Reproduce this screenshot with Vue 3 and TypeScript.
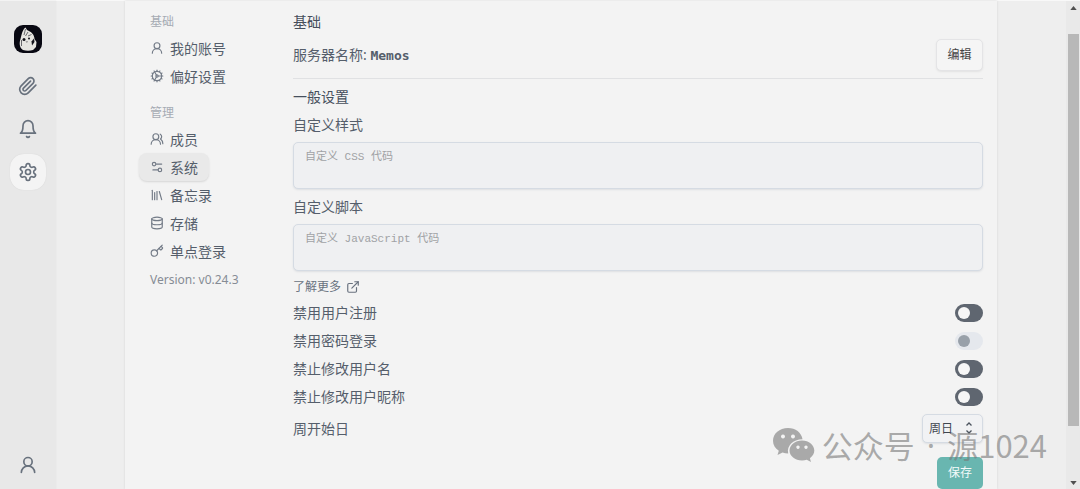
<script setup lang="ts">
import { ref } from 'vue'

const circle = (cx: number, cy: number, r: number): string =>
  `M${cx - r} ${cy}a${r} ${r} 0 1 0 ${2 * r} 0a${r} ${r} 0 1 0 ${-2 * r} 0`

const icons: Record<string, string[]> = {
  clip: ['m21.44 11.05-9.19 9.19a6 6 0 0 1-8.49-8.49l8.57-8.57A4 4 0 1 1 18 8.84l-8.59 8.57a2 2 0 0 1-2.83-2.83l8.49-8.48'],
  bell: ['M6 8a6 6 0 0 1 12 0c0 7 3 9 3 9H3s3-2 3-9', 'M10.3 21a1.94 1.94 0 0 0 3.4 0'],
  settings: [
    'M12.22 2h-.44a2 2 0 0 0-2 2v.18a2 2 0 0 1-1 1.73l-.43.25a2 2 0 0 1-2 0l-.15-.08a2 2 0 0 0-2.73.73l-.22.38a2 2 0 0 0 .73 2.73l.15.1a2 2 0 0 1 1 1.72v.51a2 2 0 0 1-1 1.74l-.15.09a2 2 0 0 0-.73 2.73l.22.38a2 2 0 0 0 2.73.73l.15-.08a2 2 0 0 1 2 0l.43.25a2 2 0 0 1 1 1.73V20a2 2 0 0 0 2 2h.44a2 2 0 0 0 2-2v-.18a2 2 0 0 1 1-1.73l.43-.25a2 2 0 0 1 2 0l.15.08a2 2 0 0 0 2.73-.73l.22-.39a2 2 0 0 0-.73-2.73l-.15-.08a2 2 0 0 1-1-1.74v-.5a2 2 0 0 1 1-1.74l.15-.09a2 2 0 0 0 .73-2.73l-.22-.38a2 2 0 0 0-2.73-.73l-.15.08a2 2 0 0 1-2 0l-.43-.25a2 2 0 0 1-1-1.73V4a2 2 0 0 0-2-2z',
    circle(12, 12, 3),
  ],
  user: [circle(12, 8, 5), 'M20 21a8 8 0 0 0-16 0'],
  cog: [
    circle(12, 12, 8),
    circle(12, 12, 2),
    'M12 2v2', 'M12 22v-2', 'm17 20.66-1-1.73', 'M11 10.27 7 3.34', 'm20.66 17-1.73-1', 'm3.34 7 1.73 1',
    'M14 12h8', 'M2 12h2', 'm20.66 7-1.73 1', 'm3.34 17 1.73-1', 'm17 3.34-1 1.73', 'm11 13.73-4 6.93',
  ],
  users: ['M18 21a8 8 0 0 0-16 0', circle(10, 8, 5), 'M22 20c0-3.37-2-6.5-4-8a5 5 0 0 0-.45-8.3'],
  sliders: ['M20 7h-9', 'M14 17H5', circle(17, 17, 3), circle(7, 7, 3)],
  library: ['m16 6 4 14', 'M12 6v14', 'M8 8v12', 'M4 4v16'],
  database: ['M3 5a9 3 0 1 0 18 0a9 3 0 1 0-18 0', 'M3 5v14a9 3 0 0 0 18 0V5', 'M3 12a9 3 0 0 0 18 0'],
  key: ['m15.5 7.5 2.3 2.3a1 1 0 0 0 1.4 0l2.1-2.1a1 1 0 0 0 0-1.4L19 4', 'm21 2-9.6 9.6', circle(7.5, 15.5, 5.5)],
  external: ['M15 3h6v6', 'M10 14 21 3', 'M18 13v6a2 2 0 0 1-2 2H5a2 2 0 0 1-2-2V8a2 2 0 0 1 2-2h6'],
}

const rail = [
  { icon: 'clip', label: '资源库' },
  { icon: 'bell', label: '通知' },
  { icon: 'settings', label: '设置' },
]

const groups = [
  {
    title: '基础',
    items: [
      { icon: 'user', label: '我的账号' },
      { icon: 'cog', label: '偏好设置' },
    ],
  },
  {
    title: '管理',
    items: [
      { icon: 'users', label: '成员' },
      { icon: 'sliders', label: '系统' },
      { icon: 'library', label: '备忘录' },
      { icon: 'database', label: '存储' },
      { icon: 'key', label: '单点登录' },
    ],
  },
]

const active = ref('系统')
const css = ref('')
const script = ref('')
const weekStart = ref('周日')
const toggles = ref([
  { id: 'signup', label: '禁用用户注册', on: false, disabled: false },
  { id: 'password', label: '禁用密码登录', on: false, disabled: true },
  { id: 'username', label: '禁止修改用户名', on: false, disabled: false },
  { id: 'nickname', label: '禁止修改用户昵称', on: false, disabled: false },
])
</script>

<template>
  <div class="page">
    <aside class="rail">
      <a class="avatar" href="#" aria-label="Memos">
        <svg viewBox="0 0 28 28" aria-hidden="true">
          <path d="M9 25C5.500 23 5 18 6.500 14C7.500 11 8 5 11.500 2.500L13 5C17 6.500 20.500 9.500 20.500 14L22.500 17L22 22L19 25Q14 26.500 9 25Z" fill="#e6e5e1" />
          <path d="M11.500 4L10 10M14 7L11.500 11M17.500 9.500L14 11M7.500 15V21" stroke="#4a4b50" stroke-width="0.800" fill="none" />
          <circle cx="10" cy="14.500" r="1.500" fill="#14141c" />
          <circle cx="15" cy="13.500" r="1" fill="#14141c" />
          <path d="M17.500 16.500L20 13.500L20.500 17L18 20.500Z" fill="#14141c" />
          <path d="M11.500 16.500L13 18L14 16Z" fill="#8a8a8c" />
        </svg>
      </a>
      <nav class="rail-nav">
        <a v-for="r in rail" :key="r.icon" href="#" class="rail-link" :class="{ current: r.icon === 'settings' }" :aria-label="r.label">
          <svg class="icon" viewBox="0 0 24 24" aria-hidden="true"><path v-for="d in icons[r.icon]" :key="d" :d="d" /></svg>
        </a>
      </nav>
      <a href="#" class="rail-link account" aria-label="账号">
        <svg class="icon" viewBox="0 0 24 24" aria-hidden="true"><path v-for="d in icons.user" :key="d" :d="d" /></svg>
      </a>
    </aside>

    <div class="stage">
      <section class="card">
        <nav class="menu">
          <div v-for="g in groups" :key="g.title" class="group">
            <span class="group-title">{{ g.title }}</span>
            <button v-for="i in g.items" :key="i.label" type="button" class="item" :class="{ active: active === i.label }" @click="active = i.label">
              <svg class="icon" viewBox="0 0 24 24" aria-hidden="true"><path v-for="d in icons[i.icon]" :key="d" :d="d" /></svg>
              <span>{{ i.label }}</span>
            </button>
          </div>
          <span class="version">Version: v0.24.3</span>
        </nav>

        <main class="panel">
          <p class="line strong">基础</p>
          <div class="row server">
            <div>服务器名称: <span class="name">Memos</span></div>
            <button type="button" class="btn edit">编辑</button>
          </div>
          <hr class="rule" />
          <p class="line strong">一般设置</p>
          <label class="line" for="css">自定义样式</label>
          <textarea id="css" v-model="css" class="area" placeholder="自定义 CSS 代码"></textarea>
          <label class="line" for="script">自定义脚本</label>
          <textarea id="script" v-model="script" class="area" placeholder="自定义 JavaScript 代码"></textarea>
          <a href="#" class="more">
            <span>了解更多</span>
            <svg class="icon" viewBox="0 0 24 24" aria-hidden="true"><path v-for="d in icons.external" :key="d" :d="d" /></svg>
          </a>
          <div v-for="t in toggles" :key="t.id" class="row line">
            <label :for="t.id">{{ t.label }}</label>
            <input :id="t.id" v-model="t.on" class="switch" type="checkbox" role="switch" :disabled="t.disabled" />
          </div>
          <div class="row">
            <label for="week">周开始日</label>
            <div class="picker">
              <select id="week" v-model="weekStart">
                <option>周六</option>
                <option>周日</option>
                <option>周一</option>
              </select>
              <svg class="chevrons" viewBox="0 0 16 16" aria-hidden="true"><path d="M5.500 5.500L8 3L10.500 5.500M5.500 10.500L8 13L10.500 10.500" /></svg>
            </div>
          </div>
          <button type="button" class="btn save">保存</button>
        </main>
      </section>
    </div>

    <div class="scroll" aria-hidden="true">
      <svg viewBox="0 0 8 5"><path d="M4 0L8 5H0Z" /></svg>
      <div class="track"><div class="thumb"></div></div>
      <svg viewBox="0 0 8 5"><path d="M0 0H8L4 5Z" /></svg>
    </div>

    <div class="watermark">
      <svg viewBox="0 0 42 34" aria-hidden="true">
        <path fill-rule="evenodd" d="M15 0C6.500 0 0 5.500 0 12.800C0 17 2.200 20.500 5.800 22.800L4.500 27L9.500 24.500C11.300 25.100 13.100 25.400 15.200 25.400C13.500 18 20 11.300 29.500 11.300C28.500 4.500 22.500 0 15 0ZM10 6.500a2 2 0 1 1-.01 0ZM20 6.500a2 2 0 1 1-.01 0Z" />
        <path fill-rule="evenodd" d="M29 12.500C22 12.500 16.500 17 16.500 22.600C16.500 28.200 22 32.500 29 32.500C30.700 32.500 32.300 32.200 33.800 31.700L38 34L36.900 30.200C39.600 28.400 41.300 25.700 41.300 22.600C41.300 17 36 12.500 29 12.500ZM25 17.500a1.700 1.700 0 1 1-.01 0ZM33 17.500a1.700 1.700 0 1 1-.01 0Z" />
      </svg>
      <div class="mark-text">
        <span>公众号</span>
        <span class="dot">·</span>
        <span>源1024</span>
      </div>
    </div>
  </div>
</template>

<style>
body {
  background: #eeeeee;
}
</style>

<style scoped>
* {
  box-sizing: border-box;
}

.page {
  position: relative;
  display: flex;
  min-height: 100vh;
  border-top: 1px solid #f8f8f8;
  color: #555e6b;
  font: 14px/21px "Noto Sans", "Noto Sans CJK SC", sans-serif;
}

button,
select {
  font-family: inherit;
  color: inherit;
  cursor: pointer;
}

a {
  color: inherit;
  text-decoration: none;
}

.icon {
  flex: none;
  fill: none;
  stroke: currentColor;
  stroke-width: 2;
  stroke-linecap: round;
  stroke-linejoin: round;
}

.rail {
  flex: 0 0 56px;
  display: flex;
  flex-direction: column;
  align-items: center;
  padding: 24px 0 6px;
  background: #e8e8e8;
  box-shadow: 0 0 1px #d8d8d8;
  color: #68717d;
}

.avatar {
  width: 28px;
  height: 28px;
  border-radius: 9px;
  background: #080812;
  overflow: hidden;
}

.avatar svg {
  display: block;
}

.rail-nav {
  display: flex;
  flex-direction: column;
  gap: 7px;
  margin-top: 15px;
}

.rail-link {
  display: flex;
  align-items: center;
  justify-content: center;
  width: 36px;
  height: 36px;
  border-radius: 14px;
}

.rail-link .icon {
  width: 20px;
  height: 20px;
}

.rail-link.current {
  background: #f4f4f4;
  box-shadow: 0 0 1px #cccccc;
}

.account {
  margin-top: auto;
}

.stage {
  flex: 1;
  display: flex;
  justify-content: center;
  padding: 0 69px;
}

.card {
  flex: 1;
  max-width: 1100px;
  display: flex;
  gap: 14px;
  padding: 10px 14px 0;
  background: #f3f3f3;
  box-shadow: 0 0 2px #d4d4d4;
}

.menu {
  flex: 0 0 140px;
  display: flex;
  flex-direction: column;
  padding-top: 2px;
}

.group {
  display: flex;
  flex-direction: column;
  align-items: flex-start;
  margin-bottom: 14px;
}

.group:last-of-type {
  margin-bottom: 5px;
}

.group-title {
  padding-left: 11px;
  margin-bottom: 3px;
  font-size: 12px;
  line-height: 18px;
  color: #a6abb3;
}

.item {
  display: flex;
  align-items: center;
  gap: 6px;
  height: 28px;
  padding: 0 11px;
  border: 0;
  border-radius: 8px;
  background: none;
  font-size: 14px;
  line-height: 21px;
}

.item .icon {
  width: 14px;
  height: 14px;
  color: #737b87;
}

.item.active {
  background: #e9e9e9;
  box-shadow: 0 1px 2px #d6d6d6;
}

.version {
  padding-left: 11px;
  font-size: 12px;
  line-height: 20px;
  color: #868c95;
}

.panel {
  flex: 1;
  min-width: 0;
  display: flex;
  flex-direction: column;
  gap: 7px;
}

.line {
  margin: 0;
  height: 21px;
}

.strong {
  color: #464f5c;
}

.row {
  display: flex;
  align-items: center;
  justify-content: space-between;
}

.name {
  font: bold 13px/21px "DejaVu Sans Mono", monospace;
}

.btn {
  height: 32px;
  padding: 0 10px;
  border: 1px solid #e4e4e6;
  border-radius: 5px;
  background: #f5f5f5;
  font-size: 12px;
  line-height: 18px;
}

.edit {
  width: 47px;
  color: #444444;
  box-shadow: 0 1px 2px #e2e2e2;
}

.rule {
  width: 100%;
  height: 1px;
  margin: 0;
  border: 0;
  background: #e0e1e3;
}

.area {
  display: block;
  width: 100%;
  height: 47px;
  padding: 5px 11px;
  border: 1px solid #d5dbe3;
  border-radius: 5px;
  background: #eff0f2;
  box-shadow: 0 1px 2px #dddfe2;
  color: #505967;
  font: 11px/18px "Liberation Mono", "Noto Sans CJK SC", monospace;
  resize: none;
}

.area::placeholder {
  color: #a0a2a5;
}

.more {
  display: flex;
  align-items: center;
  align-self: flex-start;
  gap: 5px;
  font-size: 12px;
  line-height: 17px;
  color: #69727f;
}

.more .icon {
  width: 14px;
  height: 14px;
}

.switch {
  appearance: none;
  display: flex;
  align-items: center;
  width: 28px;
  height: 18px;
  margin: 0;
  padding: 0 3px;
  border-radius: 9px;
  background: #5f6670;
}

.switch::before {
  content: "";
  width: 12px;
  height: 12px;
  border-radius: 50%;
  background: #f6f6f6;
}

.switch:checked {
  justify-content: flex-end;
}

.switch:disabled {
  background: #e5e8ed;
}

.switch:disabled::before {
  background: #98a0a9;
}

.picker {
  position: relative;
}

.picker select {
  display: block;
  appearance: none;
  width: 61px;
  height: 29px;
  padding: 0 6px;
  border: 1px solid #d5dbe3;
  border-radius: 5px;
  background: #f1f2f4;
  box-shadow: 0 1px 2px #dddfe2;
  font-size: 12px;
  color: #3f4650;
}

.chevrons {
  position: absolute;
  top: 6px;
  right: 6px;
  width: 16px;
  height: 16px;
  fill: none;
  stroke: #4b535e;
  stroke-width: 1.3;
  pointer-events: none;
}

.save {
  align-self: flex-end;
  margin-top: 7px;
  width: 46px;
  border: 0;
  background: #69b6b0;
  color: #f4fbfa;
}

.scroll {
  flex: 0 0 14px;
  display: flex;
  flex-direction: column;
  align-items: center;
  padding: 5px 0 4px;
  background: #e9e9e9;
}

.scroll svg {
  flex: none;
  width: 7px;
  height: 4px;
  fill: #505050;
}

.track {
  flex: 1;
  display: flex;
  flex-direction: column;
  padding: 24px 0 55px;
}

.thumb {
  flex: 1;
  width: 11px;
  background: #b8b8b8;
}

.watermark {
  position: absolute;
  right: 33px;
  bottom: 22px;
  display: flex;
  align-items: center;
  gap: 7px;
  color: rgba(120, 120, 120, 0.6);
  font: 31px/44px "Noto Sans CJK SC", sans-serif;
  white-space: nowrap;
  pointer-events: none;
}

.watermark svg {
  width: 42px;
  height: 34px;
  fill: currentColor;
}

.mark-text {
  display: flex;
  gap: 12px;
}

.dot {
  font-family: "Noto Sans", sans-serif;
}
</style>
